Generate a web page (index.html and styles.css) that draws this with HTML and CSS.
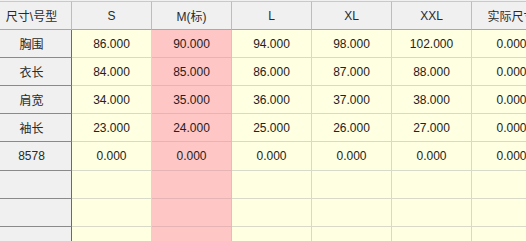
FILE: index.html
```html
<!DOCTYPE html>
<html lang="zh">
<head>
<meta charset="utf-8">
<link rel="stylesheet" href="styles.css">
</head>
<body>
<div class="view">
  <div class="grid">
    <div class="hd">尺寸\号型</div><div class="hd">S</div><div class="hd">M(标)</div><div class="hd">L</div><div class="hd">XL</div><div class="hd">XXL</div><div class="hd">实际尺寸</div>

    <div class="rh">胸围</div><div class="c">86.000</div><div class="c m">90.000</div><div class="c">94.000</div><div class="c">98.000</div><div class="c">102.000</div><div class="c">0.000</div>
    <div class="rh">衣长</div><div class="c">84.000</div><div class="c m">85.000</div><div class="c">86.000</div><div class="c">87.000</div><div class="c">88.000</div><div class="c">0.000</div>
    <div class="rh">肩宽</div><div class="c">34.000</div><div class="c m">35.000</div><div class="c">36.000</div><div class="c">37.000</div><div class="c">38.000</div><div class="c">0.000</div>
    <div class="rh">袖长</div><div class="c">23.000</div><div class="c m">24.000</div><div class="c">25.000</div><div class="c">26.000</div><div class="c">27.000</div><div class="c">0.000</div>
    <div class="rh">8578</div><div class="c">0.000</div><div class="c m">0.000</div><div class="c">0.000</div><div class="c">0.000</div><div class="c">0.000</div><div class="c">0.000</div>
    <div class="rh"></div><div class="c"></div><div class="c m"></div><div class="c"></div><div class="c"></div><div class="c"></div><div class="c"></div>
    <div class="rh"></div><div class="c"></div><div class="c m"></div><div class="c"></div><div class="c"></div><div class="c"></div><div class="c"></div>
    <div class="rh"></div><div class="c"></div><div class="c m"></div><div class="c"></div><div class="c"></div><div class="c"></div><div class="c"></div>
  </div>
</div>
</body>
</html>
```
FILE: styles.css
```css
html, body {
  margin: 0;
  padding: 0;
  background: #ffffff;
}
body {
  width: 526px;
  height: 241px;
  overflow: hidden;
  font-family: "Liberation Sans", "Noto Sans CJK SC", sans-serif;
  font-size: 12px;
  color: #222222;
}
.view {
  width: 526px;
  height: 241px;
  overflow: hidden;
  background: #f0f0f0;
  padding-top: 1px;
  box-sizing: border-box;
}
.grid {
  display: grid;
  grid-template-columns: repeat(7, 80px);
  grid-template-rows: 29px 28px 28px 28px 28px 29px 28px 28px 28px;
  margin-left: -8px;
  width: max-content;
}
.grid > div {
  box-sizing: border-box;
  display: flex;
  align-items: center;
  justify-content: center;
  white-space: nowrap;
  overflow: hidden;
  border-right: 1px solid #d9d9c9;
  border-bottom: 1px solid #d9d9c9;
}
.grid > .hd {
  background: #f0f0f0;
  border-top: 1px solid #c9c9c9;
  border-right: 1px solid #bdbdbd;
  border-bottom: 1px solid #a9a9a9;
  color: #2a2a2a;
}
.grid > .rh {
  background: #f0f0f0;
  border-right: 1px solid #6a6a6a;
  border-bottom: 1px solid #8a8a8a;
  color: #2a2a2a;
}
.grid > .c {
  background: #ffffe2;
}
.grid > .c.m {
  background: #ffc6c6;
  border-bottom-color: #e6b4b4;
  border-right-color: #d9c4b4;
}
```
